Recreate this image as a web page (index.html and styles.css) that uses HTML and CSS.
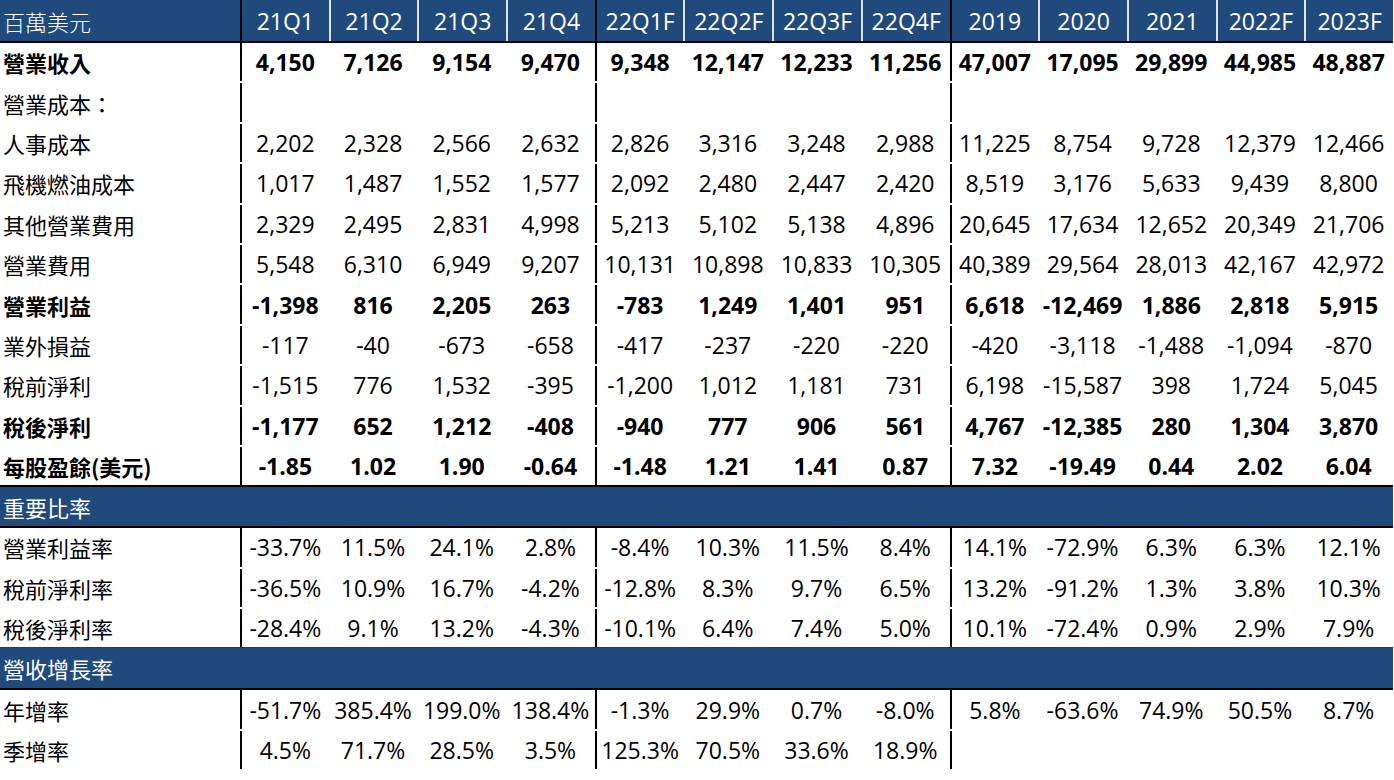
FILE: index.html
```html
<!DOCTYPE html>
<html lang="zh-Hant">
<head>
<meta charset="utf-8">
<title>財務預估</title>
<link rel="stylesheet" href="styles.css">
</head>
<body>
<div class="sheet">
  <div class="row head">
    <div class="lbl">百萬美元</div>
    <div class="c g">21Q1</div><div class="c">21Q2</div><div class="c">21Q3</div><div class="c">21Q4</div>
    <div class="c g">22Q1F</div><div class="c">22Q2F</div><div class="c">22Q3F</div><div class="c">22Q4F</div>
    <div class="c g">2019</div><div class="c">2020</div><div class="c">2021</div><div class="c">2022F</div><div class="c">2023F</div>
  </div>

  <div class="block">
    <div class="row b">
      <div class="lbl">營業收入</div>
      <div class="c g">4,150</div><div class="c">7,126</div><div class="c">9,154</div><div class="c">9,470</div>
      <div class="c g">9,348</div><div class="c">12,147</div><div class="c">12,233</div><div class="c">11,256</div>
      <div class="c g">47,007</div><div class="c">17,095</div><div class="c">29,899</div><div class="c">44,985</div><div class="c">48,887</div>
    </div>
    <div class="row">
      <div class="lbl">營業成本：</div>
      <div class="c g"></div><div class="c"></div><div class="c"></div><div class="c"></div>
      <div class="c g"></div><div class="c"></div><div class="c"></div><div class="c"></div>
      <div class="c g"></div><div class="c"></div><div class="c"></div><div class="c"></div><div class="c"></div>
    </div>
    <div class="row">
      <div class="lbl">人事成本</div>
      <div class="c g">2,202</div><div class="c">2,328</div><div class="c">2,566</div><div class="c">2,632</div>
      <div class="c g">2,826</div><div class="c">3,316</div><div class="c">3,248</div><div class="c">2,988</div>
      <div class="c g">11,225</div><div class="c">8,754</div><div class="c">9,728</div><div class="c">12,379</div><div class="c">12,466</div>
    </div>
    <div class="row">
      <div class="lbl">飛機燃油成本</div>
      <div class="c g">1,017</div><div class="c">1,487</div><div class="c">1,552</div><div class="c">1,577</div>
      <div class="c g">2,092</div><div class="c">2,480</div><div class="c">2,447</div><div class="c">2,420</div>
      <div class="c g">8,519</div><div class="c">3,176</div><div class="c">5,633</div><div class="c">9,439</div><div class="c">8,800</div>
    </div>
    <div class="row">
      <div class="lbl">其他營業費用</div>
      <div class="c g">2,329</div><div class="c">2,495</div><div class="c">2,831</div><div class="c">4,998</div>
      <div class="c g">5,213</div><div class="c">5,102</div><div class="c">5,138</div><div class="c">4,896</div>
      <div class="c g">20,645</div><div class="c">17,634</div><div class="c">12,652</div><div class="c">20,349</div><div class="c">21,706</div>
    </div>
    <div class="row">
      <div class="lbl">營業費用</div>
      <div class="c g">5,548</div><div class="c">6,310</div><div class="c">6,949</div><div class="c">9,207</div>
      <div class="c g">10,131</div><div class="c">10,898</div><div class="c">10,833</div><div class="c">10,305</div>
      <div class="c g">40,389</div><div class="c">29,564</div><div class="c">28,013</div><div class="c">42,167</div><div class="c">42,972</div>
    </div>
    <div class="row b">
      <div class="lbl">營業利益</div>
      <div class="c g">-1,398</div><div class="c">816</div><div class="c">2,205</div><div class="c">263</div>
      <div class="c g">-783</div><div class="c">1,249</div><div class="c">1,401</div><div class="c">951</div>
      <div class="c g">6,618</div><div class="c">-12,469</div><div class="c">1,886</div><div class="c">2,818</div><div class="c">5,915</div>
    </div>
    <div class="row">
      <div class="lbl">業外損益</div>
      <div class="c g">-117</div><div class="c">-40</div><div class="c">-673</div><div class="c">-658</div>
      <div class="c g">-417</div><div class="c">-237</div><div class="c">-220</div><div class="c">-220</div>
      <div class="c g">-420</div><div class="c">-3,118</div><div class="c">-1,488</div><div class="c">-1,094</div><div class="c">-870</div>
    </div>
    <div class="row">
      <div class="lbl">稅前淨利</div>
      <div class="c g">-1,515</div><div class="c">776</div><div class="c">1,532</div><div class="c">-395</div>
      <div class="c g">-1,200</div><div class="c">1,012</div><div class="c">1,181</div><div class="c">731</div>
      <div class="c g">6,198</div><div class="c">-15,587</div><div class="c">398</div><div class="c">1,724</div><div class="c">5,045</div>
    </div>
    <div class="row b">
      <div class="lbl">稅後淨利</div>
      <div class="c g">-1,177</div><div class="c">652</div><div class="c">1,212</div><div class="c">-408</div>
      <div class="c g">-940</div><div class="c">777</div><div class="c">906</div><div class="c">561</div>
      <div class="c g">4,767</div><div class="c">-12,385</div><div class="c">280</div><div class="c">1,304</div><div class="c">3,870</div>
    </div>
    <div class="row b">
      <div class="lbl">每股盈餘(美元)</div>
      <div class="c g">-1.85</div><div class="c">1.02</div><div class="c">1.90</div><div class="c">-0.64</div>
      <div class="c g">-1.48</div><div class="c">1.21</div><div class="c">1.41</div><div class="c">0.87</div>
      <div class="c g">7.32</div><div class="c">-19.49</div><div class="c">0.44</div><div class="c">2.02</div><div class="c">6.04</div>
    </div>
  </div>

  <div class="section first">重要比率</div>

  <div class="block">
    <div class="row">
      <div class="lbl">營業利益率</div>
      <div class="c g">-33.7%</div><div class="c">11.5%</div><div class="c">24.1%</div><div class="c">2.8%</div>
      <div class="c g">-8.4%</div><div class="c">10.3%</div><div class="c">11.5%</div><div class="c">8.4%</div>
      <div class="c g">14.1%</div><div class="c">-72.9%</div><div class="c">6.3%</div><div class="c">6.3%</div><div class="c">12.1%</div>
    </div>
    <div class="row">
      <div class="lbl">稅前淨利率</div>
      <div class="c g">-36.5%</div><div class="c">10.9%</div><div class="c">16.7%</div><div class="c">-4.2%</div>
      <div class="c g">-12.8%</div><div class="c">8.3%</div><div class="c">9.7%</div><div class="c">6.5%</div>
      <div class="c g">13.2%</div><div class="c">-91.2%</div><div class="c">1.3%</div><div class="c">3.8%</div><div class="c">10.3%</div>
    </div>
    <div class="row">
      <div class="lbl">稅後淨利率</div>
      <div class="c g">-28.4%</div><div class="c">9.1%</div><div class="c">13.2%</div><div class="c">-4.3%</div>
      <div class="c g">-10.1%</div><div class="c">6.4%</div><div class="c">7.4%</div><div class="c">5.0%</div>
      <div class="c g">10.1%</div><div class="c">-72.4%</div><div class="c">0.9%</div><div class="c">2.9%</div><div class="c">7.9%</div>
    </div>
  </div>

  <div class="section second">營收增長率</div>

  <div class="block">
    <div class="row">
      <div class="lbl">年增率</div>
      <div class="c g">-51.7%</div><div class="c">385.4%</div><div class="c">199.0%</div><div class="c">138.4%</div>
      <div class="c g">-1.3%</div><div class="c">29.9%</div><div class="c">0.7%</div><div class="c">-8.0%</div>
      <div class="c g">5.8%</div><div class="c">-63.6%</div><div class="c">74.9%</div><div class="c">50.5%</div><div class="c">8.7%</div>
    </div>
    <div class="row">
      <div class="lbl">季增率</div>
      <div class="c g">4.5%</div><div class="c">71.7%</div><div class="c">28.5%</div><div class="c">3.5%</div>
      <div class="c g">125.3%</div><div class="c">70.5%</div><div class="c">33.6%</div><div class="c">18.9%</div>
      <div class="c g"></div><div class="c"></div><div class="c"></div><div class="c"></div><div class="c"></div>
    </div>
  </div>
</div>
</body>
</html>
```

FILE: styles.css
```css
html, body {
  margin: 0;
  padding: 0;
  background: #ffffff;
}

body {
  font-family: "Open Sans", "Noto Sans CJK TC", sans-serif;
  color: #000000;
}

.sheet {
  width: 1393px;
  display: flex;
  flex-direction: column;
}

.row {
  display: grid;
  grid-template-columns: 240px repeat(13, 1fr);
  height: 38.4px;
  font-size: 23px;
}

.row.b {
  font-weight: 700;
}

.lbl {
  display: flex;
  align-items: center;
  padding-left: 3px;
  font-size: 22px;
  white-space: nowrap;
  font-family: "Noto Sans CJK TC", sans-serif;
}

.row.b .lbl {
  font-weight: 700;
}

.c {
  display: flex;
  align-items: center;
  justify-content: center;
  white-space: nowrap;
  min-width: 0;
}

.c.g {
  border-left: 2px solid #000000;
}

.block {
  display: flex;
  flex-direction: column;
  gap: 2px;
}

.head {
  height: 41px;
  background: #214a7c;
  color: #ffffff;
  border-bottom: 2px solid #000000;
}

.head .lbl {
  font-weight: 300;
}

.head .c {
  border-left: 2px solid #dfe4ec;
}

.head .c.g {
  border-left: 2px solid #000000;
}

.section {
  display: flex;
  align-items: center;
  padding-left: 3px;
  background: #214a7c;
  color: #ffffff;
  font-size: 22px;
  font-family: "Noto Sans CJK TC", sans-serif;
  border-bottom: 2px solid #000000;
}

.section.first {
  height: 39px;
  border-top: 2px solid #000000;
}

.section.second {
  height: 40px;
  border-top: 1px solid #3a3a3a;
}
```
